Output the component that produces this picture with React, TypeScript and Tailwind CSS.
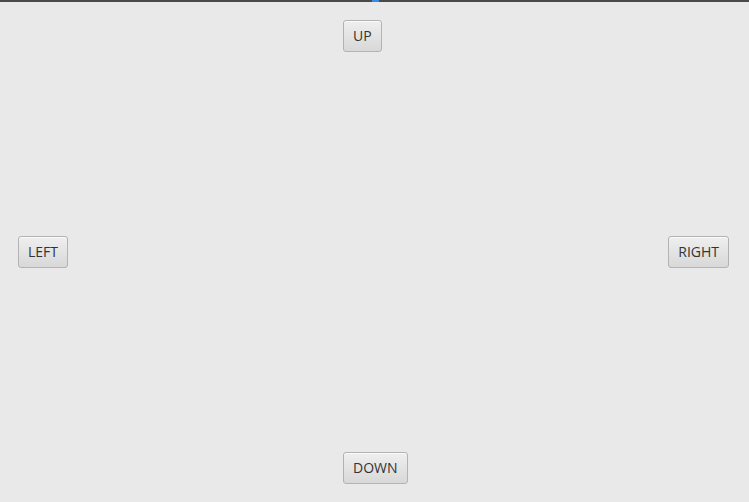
const Btn = ({ label }: { label: string }) => (
  <button className="h-[32px] rounded-[3px] border border-[#b3b3b3] bg-gradient-to-b from-[#efefef] to-[#d8d8d8] px-[9px] text-[14px] leading-none text-[#333333] shadow-[inset_0_1px_0_#fafafa] [font-family:'Open_Sans',sans-serif]">
    {label}
  </button>
);

export default function App() {
  return (
    <div className="flex h-[502px] w-[749px] flex-col bg-[#e9e9e9]">
      <div className="flex h-[2px] w-full bg-[#4a4a4a]">
        <div className="ml-[372px] h-full w-[7px] bg-[#3b8be0]" />
      </div>
      <div className="pl-[343px] pt-[18px]">
        <Btn label="UP" />
      </div>
      <div className="flex flex-1 items-center justify-between pl-[18px] pr-[20px]">
        <Btn label="LEFT" />
        <Btn label="RIGHT" />
      </div>
      <div className="pb-[18px] pl-[343px]">
        <Btn label="DOWN" />
      </div>
    </div>
  );
}
